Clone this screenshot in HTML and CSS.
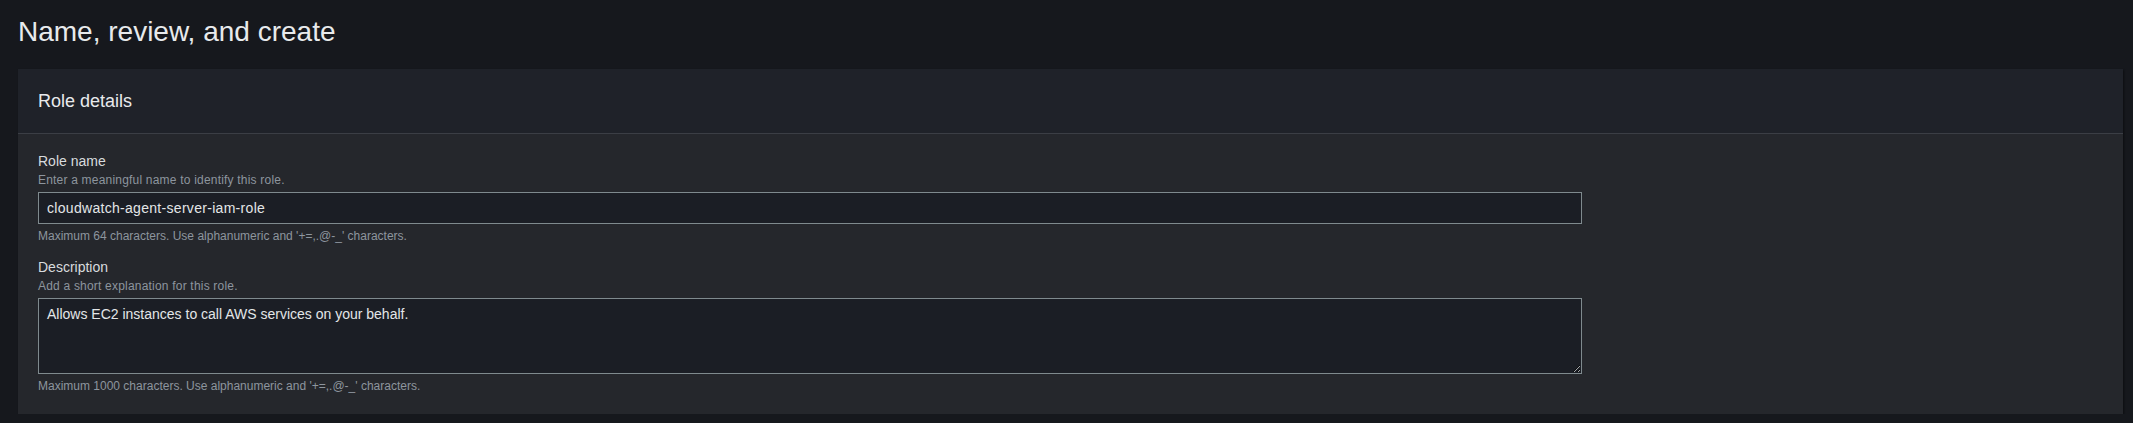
FILE: index.html
```html
<!DOCTYPE html>
<html lang="en">
<head>
<meta charset="utf-8">
<title>Name, review, and create</title>
<link rel="stylesheet" href="styles.css">
</head>
<body>
<main class="page">
  <h1 class="page-title">Name, review, and create</h1>
  <section class="panel">
    <header class="panel-header">
      <h2 class="panel-title">Role details</h2>
    </header>
    <div class="panel-body">
      <div class="field">
        <label class="field-label" for="role-name">Role name</label>
        <div class="field-desc">Enter a meaningful name to identify this role.</div>
        <input class="text-input" id="role-name" type="text" value="cloudwatch-agent-server-iam-role">
        <div class="field-hint">Maximum 64 characters. Use alphanumeric and '+=,.@-_' characters.</div>
      </div>
      <div class="field">
        <label class="field-label" for="role-desc">Description</label>
        <div class="field-desc">Add a short explanation for this role.</div>
        <textarea class="text-area" id="role-desc">Allows EC2 instances to call AWS services on your behalf.</textarea>
        <div class="field-hint">Maximum 1000 characters. Use alphanumeric and '+=,.@-_' characters.</div>
      </div>
    </div>
  </section>
</main>
</body>
</html>
```

FILE: styles.css
```css
html, body {
  margin: 0;
  padding: 0;
  background: #16181d;
}

body {
  font-family: "Liberation Sans", Arial, sans-serif;
  color: #d5d8dc;
}

.page {
  padding: 14px 10px 0 18px;
}

.page-title {
  margin: 0 0 19px 0;
  font-size: 28px;
  line-height: 36px;
  font-weight: 400;
  color: #e8eaec;
}

.panel {
  background: #25272c;
  box-shadow: 1px 1px 2px rgba(0, 0, 0, 0.45);
}

.panel-header {
  background: #1f2229;
  padding: 21px 20px;
  border-bottom: 1px solid #3b3e45;
}

.panel-title {
  margin: 0;
  font-size: 18px;
  line-height: 22px;
  font-weight: 400;
  color: #e8eaec;
}

.panel-body {
  padding: 16px 20px 20px 20px;
  display: flex;
  flex-direction: column;
  gap: 12px;
}

.field {
  display: flex;
  flex-direction: column;
}

.field-label {
  font-size: 14px;
  line-height: 22px;
  color: #d8dbde;
}

.field-desc,
.field-hint {
  font-size: 12px;
  line-height: 16px;
  color: #8d959e;
}

.field-desc {
  margin-bottom: 4px;
  letter-spacing: 0.2px;
}

.field-hint {
  margin-top: 4px;
}

.text-input,
.text-area {
  box-sizing: border-box;
  width: 1544px;
  margin: 0;
  background: #1b1e25;
  border: 1px solid #7f8a8e;
  border-radius: 0;
  color: #e3e6e8;
  font-family: "Liberation Sans", Arial, sans-serif;
  font-size: 14px;
  line-height: 22px;
  padding: 4px 8px;
  outline: none;
  color-scheme: dark;
}

.text-input {
  height: 32px;
  letter-spacing: 0.3px;
}

.text-area {
  height: 76px;
  resize: both;
  display: block;
}
```
